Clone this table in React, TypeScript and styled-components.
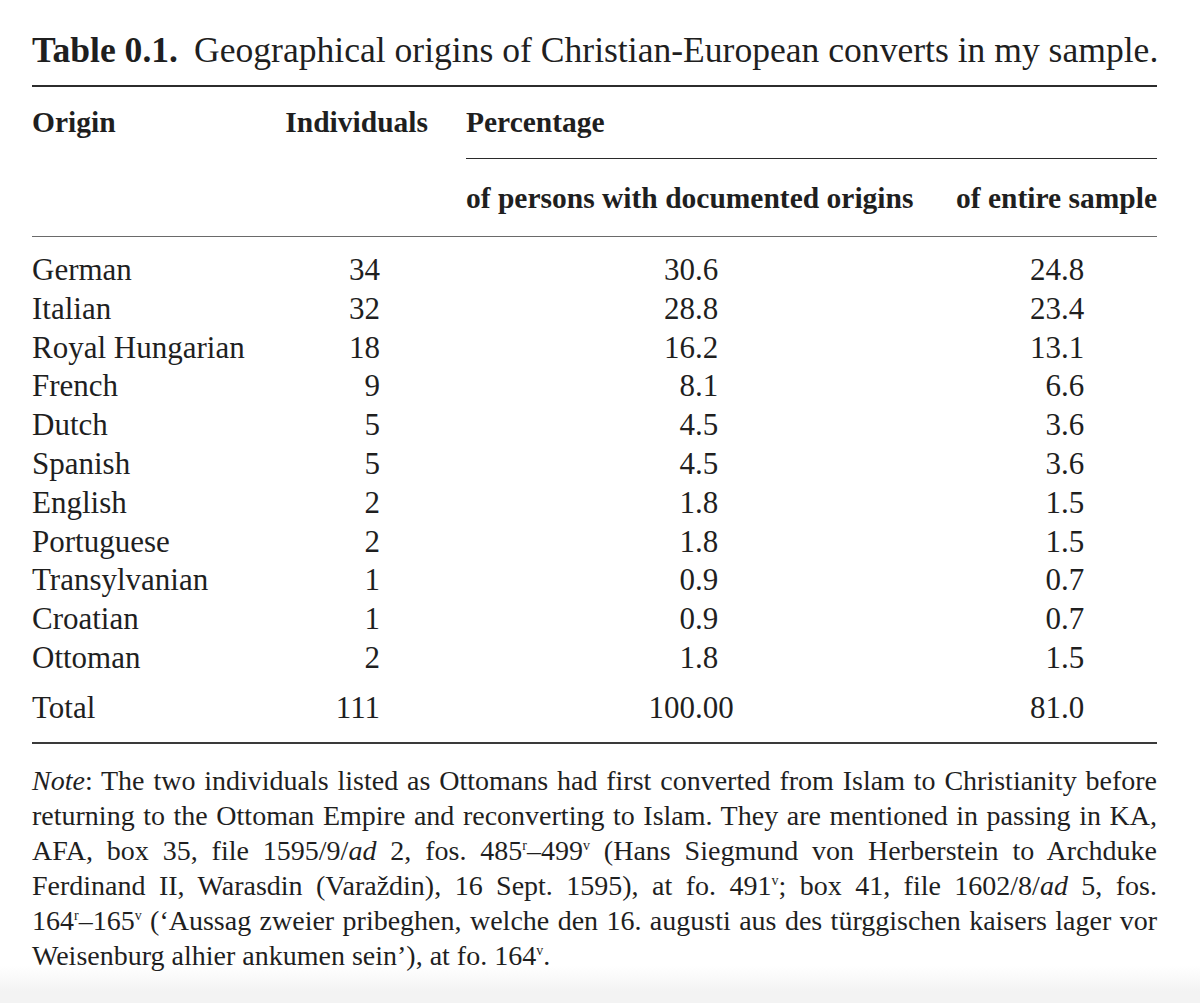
import React from "react";
import styled, { createGlobalStyle, css } from "styled-components";

const GlobalStyle = createGlobalStyle`
  html, body {
    margin: 0;
    padding: 0;
  }
  body {
    min-height: 1003px;
    background: linear-gradient(to bottom, #ffffff 0px, #ffffff 966px, #f3f3f3 992px, #f3f3f3 100%);
    font-family: "Liberation Serif", "Times New Roman", serif;
    color: #1f1f1f;
  }
`;

const columns = css`
  display: grid;
  grid-template-columns: 215px 143px 452px 1fr;
  column-gap: 38px;
`;

const Page = styled.main`
  width: 1125px;
  padding-left: 32px;
`;

const Caption = styled.h1`
  margin: 0;
  padding-top: 30px;
  font-size: 35.6px;
  line-height: 40px;
  font-weight: normal;
  white-space: nowrap;
`;

const CaptionLabel = styled.span`
  font-weight: bold;
  margin-right: 16px;
`;

const Rule = styled.div<{ $weight: number; $color: string; $gap: number }>`
  height: ${(p) => p.$weight}px;
  background: ${(p) => p.$color};
  margin-top: ${(p) => p.$gap}px;
`;

const HeadRow = styled.div<{ $pad: number }>`
  ${columns};
  padding-top: ${(p) => p.$pad}px;
  font-size: 29.5px;
  line-height: 36px;
  font-weight: bold;
  white-space: nowrap;
`;

const HeadCell = styled.div<{ $align?: string; $span?: string }>`
  text-align: ${(p) => p.$align || "left"};
  grid-column: ${(p) => p.$span || "auto"};
`;

const SpanRuleRow = styled.div`
  ${columns};
  margin-top: 18px;
`;

const SpanRule = styled.div`
  grid-column: 3 / 5;
  height: 1px;
  background: #2a2a2a;
`;

const Body = styled.div`
  padding-top: 14px;
`;

const DataRow = styled.div<{ $gap?: number }>`
  ${columns};
  margin-top: ${(p) => p.$gap || 0}px;
  font-size: 31px;
  line-height: 38.8px;
  white-space: nowrap;
`;

const OriginCell = styled.div``;

const CountCell = styled.div`
  text-align: right;
  padding-right: 48px;
`;

const DecimalCell = styled.div`
  display: flex;
`;

const IntPart = styled.span<{ $point: number }>`
  width: ${(p) => p.$point}px;
  flex: none;
  text-align: right;
`;

const FracPart = styled.span``;

const Note = styled.div`
  margin-top: 19px;
  font-size: 28px;
  line-height: 35px;
`;

const NoteLine = styled.div<{ $last?: boolean }>`
  white-space: nowrap;
  text-align: ${(p) => (p.$last ? "left" : "justify")};
  text-align-last: ${(p) => (p.$last ? "left" : "justify")};
`;

const Sup = styled.sup`
  font-size: 0.5em;
  line-height: 0;
  vertical-align: 0.75em;
`;

type Row = { origin: string; n: string; persons: string; entire: string };

const rows: Row[] = [
  { origin: "German", n: "34", persons: "30.6", entire: "24.8" },
  { origin: "Italian", n: "32", persons: "28.8", entire: "23.4" },
  { origin: "Royal Hungarian", n: "18", persons: "16.2", entire: "13.1" },
  { origin: "French", n: "9", persons: "8.1", entire: "6.6" },
  { origin: "Dutch", n: "5", persons: "4.5", entire: "3.6" },
  { origin: "Spanish", n: "5", persons: "4.5", entire: "3.6" },
  { origin: "English", n: "2", persons: "1.8", entire: "1.5" },
  { origin: "Portuguese", n: "2", persons: "1.8", entire: "1.5" },
  { origin: "Transylvanian", n: "1", persons: "0.9", entire: "0.7" },
  { origin: "Croatian", n: "1", persons: "0.9", entire: "0.7" },
  { origin: "Ottoman", n: "2", persons: "1.8", entire: "1.5" },
];

const Decimal: React.FC<{ value: string; point: number }> = ({ value, point }) => {
  const i = value.indexOf(".");
  return (
    <DecimalCell>
      <IntPart $point={point}>{value.slice(0, i)}</IntPart>
      <FracPart>{value.slice(i)}</FracPart>
    </DecimalCell>
  );
};

const PERSONS_POINT = 229;
const ENTIRE_POINT = 105;

export default function App() {
  return (
    <>
      <GlobalStyle />
      <Page>
        <Caption>
          <CaptionLabel>Table 0.1.</CaptionLabel>
          Geographical origins of Christian-European converts in my sample.
        </Caption>
        <Rule $weight={2} $color="#2c2c2c" $gap={15} />
        <HeadRow $pad={17}>
          <HeadCell>Origin</HeadCell>
          <HeadCell $align="right">Individuals</HeadCell>
          <HeadCell $span="3 / 5">Percentage</HeadCell>
        </HeadRow>
        <SpanRuleRow>
          <SpanRule />
        </SpanRuleRow>
        <HeadRow $pad={21}>
          <HeadCell $span="3">of persons with documented origins</HeadCell>
          <HeadCell $align="right">of entire sample</HeadCell>
        </HeadRow>
        <Rule $weight={1} $color="#6a6a6a" $gap={20} />
        <Body>
          {rows.map((r) => (
            <DataRow key={r.origin}>
              <OriginCell>{r.origin}</OriginCell>
              <CountCell>{r.n}</CountCell>
              <Decimal value={r.persons} point={PERSONS_POINT} />
              <Decimal value={r.entire} point={ENTIRE_POINT} />
            </DataRow>
          ))}
          <DataRow $gap={11}>
            <OriginCell>Total</OriginCell>
            <CountCell>111</CountCell>
            <Decimal value="100.00" point={PERSONS_POINT} />
            <Decimal value="81.0" point={ENTIRE_POINT} />
          </DataRow>
        </Body>
        <Rule $weight={2} $color="#3a3a3a" $gap={14} />
        <Note>
          <NoteLine>
            <i>Note</i>: The two individuals listed as Ottomans had first converted from Islam to Christianity before
          </NoteLine>
          <NoteLine>
            returning to the Ottoman Empire and reconverting to Islam. They are mentioned in passing in KA,
          </NoteLine>
          <NoteLine>
            AFA, box 35, file 1595/9/<i>ad</i> 2, fos. 485<Sup>r</Sup>–499<Sup>v</Sup> (Hans Siegmund von Herberstein to Archduke
          </NoteLine>
          <NoteLine>
            Ferdinand II, Warasdin (Varaždin), 16 Sept. 1595), at fo. 491<Sup>v</Sup>; box 41, file 1602/8/<i>ad</i> 5, fos.
          </NoteLine>
          <NoteLine>
            164<Sup>r</Sup>–165<Sup>v</Sup> (‘Aussag zweier pribeghen, welche den 16. augusti aus des türggischen kaisers lager vor
          </NoteLine>
          <NoteLine $last>
            Weisenburg alhier ankumen sein’), at fo. 164<Sup>v</Sup>.
          </NoteLine>
        </Note>
      </Page>
    </>
  );
}
